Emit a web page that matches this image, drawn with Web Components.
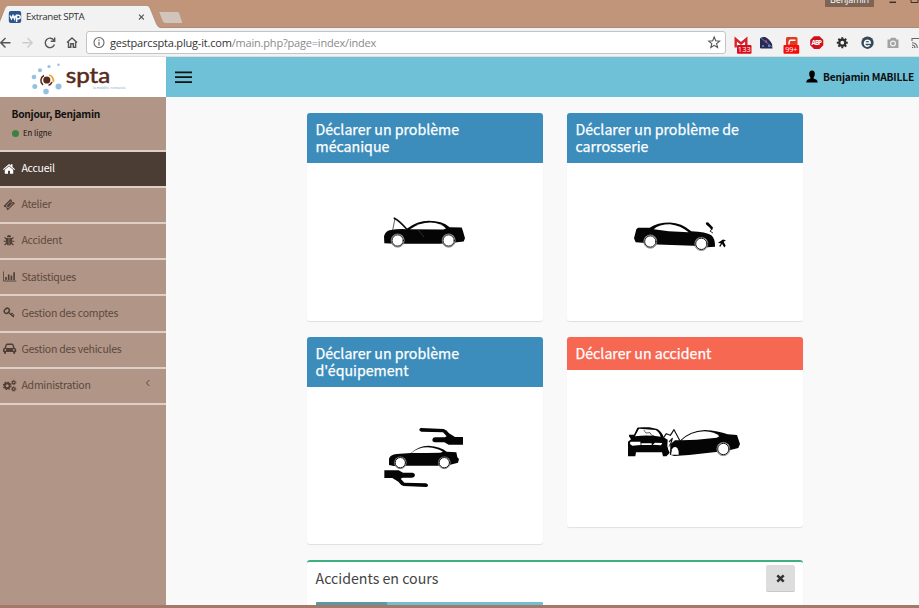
<!DOCTYPE html>
<html lang="fr">
<head>
<meta charset="utf-8">
<title>Extranet SPTA</title>
<style>
body{margin:0;width:919px;height:608px;overflow:hidden;font-family:"Noto Sans CJK JP","Open Sans",sans-serif}
</style>
</head>
<body>
<extranet-window></extranet-window>
<script>
function define(name, html) {
  const tpl = document.createElement('template');
  tpl.innerHTML = html;
  customElements.define(name, class extends HTMLElement {
    constructor() {
      super();
      this.attachShadow({mode: 'open'}).append(tpl.content.cloneNode(true));
    }
  });
}

define('browser-tabs', `
<style>
:host{display:flex;height:28px;background:#c19579;border-bottom:1px solid #a98a7c;box-sizing:border-box;position:relative;font-family:"Open Sans",sans-serif}
svg{display:block;width:190px;height:28px;flex:none}
.t{position:absolute;left:26px;top:10px;font-size:9.800px;line-height:14px;color:#333;white-space:nowrap;letter-spacing:-.43px}
.u{position:absolute;left:825px;top:0;width:49px;height:7px;overflow:hidden;background:#7d6556;color:#fff}
.u span{display:block;font-size:9px;line-height:14px;margin-top:-7px;text-align:center;letter-spacing:-.1px}
.w{position:absolute;left:885px;top:0;width:34px;height:6px}
</style>
<svg viewBox="0 0 190 28"><path d="M0 28V22L5 8Q6 5.500 8 5.500H147Q149 5.500 150 8L156.500 24Q158 28 162 28Z" fill="#f2f2f2"/><path d="M0 20L5 8Q6 5.500 8 5.500H147Q149 5.500 150 8L156.500 24Q158 28 162 28" fill="none" stroke="#a58777" stroke-width=".7"/>
<path d="M158.500 11.500H177Q179 11.500 179.600 13L183 23.500H166Q163.500 23.500 162.500 21.500Z" fill="#d2c3bb" stroke="#ac8b79" stroke-width=".6"/>
<rect x="8.800" y="11" width="12.400" height="12" rx="2" fill="#29568f"/><path d="M10 15.500L11.500 18.800 13 15.500 14.500 18.800 15.500 15.500M16.600 22V15.300H18.500A1.700 1.700 0 0 1 18.500 18.800H16.600" fill="none" stroke="#fff" stroke-width="1.500"/>
<path d="M139 14.700L143.800 19.500M143.800 14.700L139 19.500" stroke="#555" stroke-width="1.100"/></svg>
<span class="t">Extranet SPTA</span>
<div class="u"><span>Benjamin</span></div>
<svg class="w" viewBox="0 0 34 6"><path d="M4.500 2.300H11" stroke="#3b302a" stroke-width="1.500"/><path d="M26 0V2.500H33V0" fill="none" stroke="#3b302a"/></svg>
`);

define('browser-toolbar', `
<style>
:host{display:flex;align-items:center;height:29px;background:#f2f2f2;box-sizing:border-box;border-bottom:1px solid #dedede;font-family:"Open Sans",sans-serif}
.nav{width:86px;height:28px;flex:none}
.url{display:flex;align-items:center;box-sizing:border-box;width:640px;height:23px;margin-top:1px;border:1px solid #c4c4c4;border-radius:3px;background:#fff;font-size:11px;letter-spacing:-.19px;flex:none;white-space:pre;color:#8a8a8a}
.url svg{width:23px;height:21px;flex:none}
.url b{font-weight:400;color:#333}
.url .star{margin-left:auto}
.ext{width:193px;height:28px;flex:none}
text{font-family:"Open Sans",sans-serif}
</style>
<svg class="nav" viewBox="0 28 86 28" fill="none" stroke="#555" stroke-width="1.400"><path d="M10.500 42.700H.8M5.500 38L.8 42.700 5.500 47.400"/><path d="M22.500 42.700H32M27.500 38L32.200 42.700 27.500 47.400" stroke="#ccc"/><path d="M54 40.400A4.700 4.700 0 1 0 54.400 44.500M54.700 37.500V41.300H50.800"/><path d="M67 42.600L72 38 77 42.600M68.500 42V47.200H70.800V43.800H73.300V47.200H75.600V42"/></svg>
<div class="url"><svg viewBox="0 0 23 21" fill="none" stroke="#666"><circle cx="12" cy="10.500" r="5" stroke-width="1.100"/><path d="M12 9.800V13.500M12 7.500V8.800" stroke-width="1.200"/></svg><b>gestparcspta.plug-it.com</b><span>/main.php?page=index/index</span><svg class="star" viewBox="0 0 23 21"><path transform="translate(2 0)" d="M10.200 5L11.700 8.800 15.600 9.100 12.600 11.600 13.600 15.500 10.200 13.300 6.800 15.500 7.800 11.600 4.800 9.100 8.700 8.800Z" fill="none" stroke="#555" stroke-width="1.100"/></svg></div>
<svg class="ext" viewBox="726 28 193 28">
<rect x="734.500" y="38" width="13" height="9.500" fill="#fff"/><path d="M735.700 47.500V39L741 43.500 746.300 39V47.500" fill="none" stroke="#d3232b" stroke-width="2.400"/><rect x="737" y="45" width="14.500" height="8.700" rx="1" fill="#d90d1b"/><text x="744.300" y="52.400" font-size="7.500" text-anchor="middle" fill="#fff">133</text>
<path d="M760 48V38.500Q761 36.500 765 37Q769 38.500 772 44L772.500 48.500H761Z" fill="#252b58"/><path d="M761 38L772 47" stroke="#687cab"/><circle cx="766" cy="41.500" r="1.200" fill="#c44c5a"/><circle cx="769" cy="46" r="1" fill="#8c9ad0"/><circle cx="763" cy="46" r=".8" fill="#c2cbea"/>
<rect x="786" y="37" width="11.500" height="9" rx="1.500" fill="#e23b22"/><path d="M795.500 40.300H790.500Q789 40.300 789 44.500" fill="none" stroke="#fff" stroke-width="1.500"/><rect x="783.500" y="45" width="15.700" height="8.700" rx="1" fill="#f50d0d"/><text x="791.300" y="52.200" font-size="7.200" text-anchor="middle" fill="#fff">99+</text>
<path d="M814 36.200H819.500L823.300 40V45.300L819.500 49.100H814L810.200 45.300V40Z" fill="#d0101c"/><text x="816.800" y="45.200" font-size="6.300" font-weight="700" text-anchor="middle" fill="#fff" textLength="10.500">ABP</text>
<g transform="translate(842.300 42.700)" stroke="#2d2d2d" fill="none"><circle r="3" stroke-width="2.200"/><path d="M0-5.500V-3.500M0 3.500V5.500M-5.500 0H-3.500M3.500 0H5.500M-3.900-3.900L-2.600-2.600M3.900 3.900L2.600 2.600M-3.900 3.900L-2.600 2.600M3.900-3.900L2.600-2.600" stroke-width="2"/></g>
<circle cx="867.500" cy="42.700" r="6.200" fill="#34485a"/><path d="M864.500 43H870.300A2.900 3 0 1 0 869.500 45.300" stroke="#fff" fill="none" stroke-width="1.500"/>
<path d="M887.500 39.500H890L891 37.800H895.500L896.500 39.500H898.500V48H887.500Z" fill="#a2a2a2"/><circle cx="893" cy="43.500" r="2.400" fill="none" stroke="#f2f2f2" stroke-width="1.200"/>
<path d="M912 41V38.500H919M912 47.500H913.300M912 45A3 3 0 0 1 915 48M912 42.700A5 5 0 0 1 917.300 48" fill="none" stroke="#666" stroke-width="1.100"/>
</svg>
`);

define('app-header', `
<style>
:host{display:flex;height:40.300px;background:#6fc1d8}
.logo{width:166px;height:40.300px;background:#fff;flex:none}
.logo text{font-family:Lato,"Open Sans",sans-serif}
.menu{width:34px;height:40px;flex:none}
.user{margin-left:auto;display:flex;align-items:center;font-size:10.200px;letter-spacing:-.18px;font-weight:700;color:#0d0d0d;padding-right:5px;line-height:14px;white-space:nowrap}
.user svg{width:12px;height:13px;margin-right:5.500px;margin-top:-2px}
</style>
<svg class="logo" viewBox="0 57 166 40.300"><g fill="#94c1df"><circle cx="34" cy="77" r="2.300"/><circle cx="40" cy="70.300" r="2"/><circle cx="49" cy="66.500" r="1.600"/><circle cx="58.500" cy="64.800" r="1.200"/><circle cx="34.800" cy="86.500" r="2.500"/><circle cx="46" cy="91.500" r="2.800"/><circle cx="58.500" cy="86.500" r="3"/></g>
<circle cx="46.800" cy="80" r="3.600" fill="#582a19"/><path d="M44 75.500A5.700 5.700 0 0 0 43 85M48.500 85.400A5.700 5.700 0 0 0 52 82" fill="none" stroke="#582a19" stroke-width="1.500"/><path d="M49 75A6 6 0 0 1 53.300 82" fill="none" stroke="#e7a52c" stroke-width="1.800"/>
<text x="65.800" y="83.300" font-size="21" font-weight="400" fill="#582a19" stroke="#582a19" stroke-width=".5" textLength="44.500" lengthAdjust="spacingAndGlyphs">spta</text><text x="93" y="89" font-size="3.800" fill="#7fb6d4" textLength="33" lengthAdjust="spacingAndGlyphs">la mobilité retrouvée</text></svg>
<svg class="menu" viewBox="166 57 34 40"><path d="M175 72.300H192M175 77.200H192M175 82.200H192" stroke="#111" stroke-width="1.700"/></svg>
<div class="user"><svg viewBox="0 0 12 13"><path d="M6 .5C8 .5 8.800 2 8.800 4C8.800 5.800 8.200 6.700 7.600 7.400V8.600C9 9.300 11.700 9.500 11.700 12.500H.3C.3 9.500 3 9.300 4.400 8.600V7.400C3.800 6.700 3.200 5.800 3.200 4C3.200 2 4 .5 6 .5Z"/></svg><span>Benjamin MABILLE</span></div>
`);

const glyphs = {
  home: '<path d="M0 7.200L6 2 7.800 3.500V2.300H9.500V5L12 7.200 11.300 8 6 3.500.7 8Z"/><path d="M1.800 7.700L6 4.200 10.200 7.700V11.800H7V8.800H5V11.800H1.800Z"/>',
  ticket: '<path fill-rule="evenodd" d="M.5 8L7.500 1 8.900 2.300A1.200 1.200 0 0 0 10.500 4L11.900 5.300 4.800 12.300 3.500 11A1.200 1.200 0 0 0 1.900 9.300ZM2.600 7.800L5.200 10.400 9.800 5.700 7.200 3.200Z"/><path d="M3.500 7.800L7.200 4.100 9 5.800 5.200 9.500Z"/>',
  bug: '<path d="M3.900 3.300A2.100 2.200 0 0 1 8.100 3.300ZM3 4H5.700V11.500C3.700 11.200 3 9.500 3 7.500ZM6.300 4H9V7.500C9 9.500 8.300 11.200 6.300 11.500Z"/><path d="M3.300 5L1.500 3.300M.6 7.300H3M3.500 9L1.600 11M8.700 5L10.500 3.300M11.400 7.300H9M8.500 9L10.400 11" fill="none" stroke="currentColor" stroke-width="1.100"/>',
  chart: '<path d="M.4 1.500V11H13.300" fill="none" stroke="currentColor" stroke-width=".9"/><path d="M2.200 7H3.800V10H2.200ZM4.900 4.500H6.500V10H4.900ZM7.600 5.500H9.200V10H7.600ZM10.300 2.300H11.900V10H10.300Z"/>',
  key: '<ellipse cx="3.800" cy="4.800" rx="2.800" ry="2.200" transform="rotate(-45 3.800 4.800)" fill="none" stroke="currentColor" stroke-width="1.500"/><path d="M5.300 6.300L10.800 11M8.100 8.600L9.600 7M9.500 10L11 8.400" fill="none" stroke="currentColor" stroke-width="1.400"/>',
  car: '<path fill-rule="evenodd" d="M1.500 6L2.700 2.600Q3.100 1.600 4.200 1.600H9Q10.100 1.600 10.500 2.600L11.700 6Q13.200 6.300 13.200 7.600V10H12.200V11Q12.200 12 11.200 12T10.200 11V10H3V11Q3 12 2 12T1 11V10H0V7.600Q0 6.300 1.500 6ZM3 5.900H10.200L9.300 3.100H3.900ZM2.300 7A.9.900 0 1 0 2.400 8.800.9.900 0 1 0 2.300 7M10.800 7A.9.900 0 1 0 10.900 8.800.9.900 0 1 0 10.800 7"/>',
  cogs: '<g fill="none" stroke="currentColor"><circle cx="4.200" cy="6.800" r="2.500" stroke-width="1.900"/><circle cx="4.200" cy="6.800" r="3.900" stroke-width="1.100" stroke-dasharray="1.500 1.560"/><circle cx="10.700" cy="3.500" r="1.400" stroke-width="1.200"/><circle cx="10.700" cy="3.500" r="2.300" stroke-width=".7" stroke-dasharray=".9 .9"/><circle cx="10.700" cy="10" r="1.400" stroke-width="1.200"/><circle cx="10.700" cy="10" r="2.300" stroke-width=".7" stroke-dasharray=".9 .9"/></g>'
};

customElements.define('nav-item', class extends HTMLElement {
  connectedCallback() {
    this.attachShadow({mode: 'open'}).innerHTML = `
<style>
:host{display:flex;align-items:center;box-sizing:border-box;height:36.180px;border-top:2px solid #decfc8;padding-left:3.300px;padding-bottom:1.500px;color:#5c493f;font-size:10.500px;letter-spacing:-.25px;line-height:14px}
:host([active]){background:#4b3c34;color:#fff}
.i{width:14px;height:13px;fill:currentColor;margin-right:4.200px;flex:none;color:#4e3e36}
:host([active]) .i{color:#fff}
span{white-space:nowrap}
.c{width:6px;height:8px;margin-left:auto;margin-right:15px;margin-bottom:4px}
</style>
<svg class="i" viewBox="0 0 14 13">${glyphs[this.getAttribute('icon')]}</svg><span><slot></slot></span>
${this.hasAttribute('expandable') ? '<svg class="c" viewBox="0 0 6 8"><path d="M4.300 1L1.500 4 4.300 7" fill="none" stroke="#5c493f"/></svg>' : ''}`;
  }
});

define('side-bar', `
<style>
:host{display:block;width:165.500px;background:#b19586;flex:none}
.p{height:52.400px;box-sizing:border-box;padding:9px 0 0 11.500px;color:#111}
.n{font-size:10.200px;font-weight:700;line-height:16px;letter-spacing:-.26px}
.s{display:flex;align-items:center;font-size:7.800px;line-height:12px;margin-top:5px}
.s i{width:7.500px;height:7.500px;border-radius:50%;background:#3c8044;margin-right:4px}
.end{border-top:2px solid #decfc8}
</style>
<div class="p"><div class="n">Bonjour, Benjamin</div><div class="s"><i></i><span>En ligne</span></div></div>
<nav-item icon="home" active>Accueil</nav-item>
<nav-item icon="ticket">Atelier</nav-item>
<nav-item icon="bug">Accident</nav-item>
<nav-item icon="chart">Statistiques</nav-item>
<nav-item icon="key">Gestion des comptes</nav-item>
<nav-item icon="car">Gestion des vehicules</nav-item>
<nav-item icon="cogs" expandable>Administration</nav-item>
<div class="end"></div>
`);

define('report-card', `
<style>
:host{display:flex;flex-direction:column;width:236px;border-radius:3px;background:#fff;box-shadow:0 1px 1px rgba(0,0,0,.1);overflow:hidden}
header{background:var(--tone,#3c8dbc);color:#fff;font-size:14.200px;font-weight:400;-webkit-text-stroke:.25px #fff;line-height:17px;padding:8.300px 8px 8px 8.500px}
::slotted(svg){display:block;width:236px;height:157.500px}
</style>
<header><slot name="title"></slot></header><slot></slot>
`);

define('progress-bar', `
<style>
:host{display:block;width:227.500px;height:10px;background:#72bed4;border-radius:1px;overflow:hidden}
div{width:71.500px;height:10px;background:#5997a9}
</style><div></div>
`);

define('list-box', `
<style>
:host{display:block;box-sizing:border-box;width:496px;height:80px;background:#fff;border-top:2px solid #3fb080;border-radius:3px;box-shadow:0 1px 1px rgba(0,0,0,.1);padding:3px 8px 0 8.500px}
header{display:flex;justify-content:space-between;height:37px;font-size:14.200px;line-height:26px;color:#444}
button{width:29.500px;height:27px;border:0;border-bottom:1px solid #c8c8c8;border-radius:2px;background:#ddd;padding:0;display:grid;place-items:center}
svg{width:9px;height:9px}
</style>
<header><slot name="title"></slot><button aria-label="Fermer"><svg viewBox="0 0 9 9"><path d="M1.300 1.300L7.700 7.700M7.700 1.300L1.300 7.700" stroke="#333" stroke-width="2.500"/></svg></button></header>
<slot></slot>
`);

define('extranet-window', `
<style>
:host{display:flex;flex-direction:column;width:919px;height:608px;background:#f9f9f9}
.body{display:flex;height:508.200px;overflow:hidden}
main{display:grid;grid-template-columns:236px 236px;grid-template-rows:207.500px 207.500px 80px;column-gap:24px;row-gap:16px;align-items:start;align-content:start;padding:15.900px 0 0 141.500px}
list-box{grid-column:1/3}
.edge{height:2.500px;background:#a5796a;flex:none}
.k{fill:#050505}
.l{fill:none;stroke:#111;stroke-width:5;stroke-linejoin:round;stroke-linecap:round}
.wh{fill:#fff;stroke:#555;stroke-width:2}
.g{fill:#fff}
</style>
<browser-tabs></browser-tabs>
<browser-toolbar></browser-toolbar>
<app-header></app-header>
<div class="body">
<side-bar></side-bar>
<main>
<report-card><span slot="title">Déclarer un problème<br>mécanique</span>
<svg viewBox="21 175.500 708 472.500"><path class="k" d="M253 416L252 396Q254 382 268 377Q292 373 318 374Q352 349 387 349Q426 349 449 368L485 369L489 380L495 401L491 411L464 414L420 418H313L268 417Z"/><path class="g" d="M330 374Q357 355 391 354Q424 356 438 372L430 375Z"/><path class="l" d="M319 373Q300 350 283 341" stroke-width="5"/><path class="l" d="M285 342L278 377" style="stroke-width:2"/><circle class="wh" cx="293" cy="408" r="20"/><circle class="wh" cx="446" cy="408" r="20"/><circle class="l" cx="293" cy="408" r="17" style="stroke-width:3"/><circle class="l" cx="446" cy="408" r="17" style="stroke-width:3"/><path d="M355 376L372 398" stroke="#444" stroke-width="2"/></svg></report-card>
<report-card><span slot="title">Déclarer un problème de<br>carrosserie</span>
<svg viewBox="21 175.500 708 472.500"><path class="k" d="M222 401L229 374L234 370L269 370Q291 354 330 354Q364 355 394 380Q438 382 454 392Q466 402 465 427L441 428L400 424L292 420L248 415L227 413Z"/><path class="g" d="M281 374Q297 359 330 359Q361 362 386 383L326 380Z"/><circle class="wh" cx="271" cy="411" r="20"/><circle class="wh" cx="424" cy="418" r="20"/><circle class="l" cx="271" cy="411" r="17" style="stroke-width:3"/><circle class="l" cx="424" cy="418" r="17" style="stroke-width:3"/><path class="k" d="M437 355L444 353L459 369L456 378L448 368L439 361Z"/><path class="l" d="M455 374L450 380L458 385" style="stroke-width:2.500"/><path class="k" d="M474 415L489 405L498 407L491 412L497 424L493 429L486 418L482 426L477 425L483 417Z"/></svg></report-card>
<report-card><span slot="title">Déclarer un problème<br>d'équipement</span>
<svg viewBox="21 186 708 472.500"><path class="k" d="M267 420V401Q271 389 290 387L333 384Q354 363 386 362Q423 365 440 380L469 382L472 397L477 402L474 413L451 419L415 422H319L281 423Z"/><path class="g" d="M334 384Q354 367 383 367Q412 369 429 380L421 383L379 384Z"/><circle class="wh" cx="301" cy="413" r="18"/><circle class="wh" cx="433" cy="413" r="18"/><circle class="l" cx="301" cy="413" r="15.500" style="stroke-width:3"/><circle class="l" cx="433" cy="413" r="15.500" style="stroke-width:3"/>
<path class="k" d="M364 309L431 312Q440 315 447 325L465 336H489V359H446L433 352H404Q396 350 397 344Q398 337 406 337H434L440 334L429 322L364 320Q357 318 358 313Q360 309 364 309Z"/><path class="k" transform="rotate(180 371 397.500)" d="M364 309L431 312Q440 315 447 325L465 336H489V359H446L433 352H404Q396 350 397 344Q398 337 406 337H434L440 334L429 322L364 320Q357 318 358 313Q360 309 364 309Z"/></svg></report-card>
<report-card style="--tone:#f76852"><span slot="title">Déclarer un accident</span>
<svg viewBox="21 135 708 472.500"><path class="k" d="M204 394V350L213 343L207 334V329H222L232 308Q238 306 268 307L292 312Q307 322 311 337L323 344L322 364L329 384L319 394H309L306 382H228L226 394Z"/><path class="g" d="M225 334L237 311L287 315Q298 321 302 335Q263 329 225 334ZM211 350H241L242 360L217 362L210 357ZM285 353L307 354L303 361L278 359ZM244 355H275V360H244Z"/><path class="l" d="M252 316L258 324 270 323 274 330 282 333" style="stroke-width:2"/><path class="l" d="M311 337L319 326 331 331 342 314 359 346M328 350L337 340 333 354 326 366" style="stroke-width:3.500"/>
<path class="k" d="M330 389L331 358L345 346H361Q387 318 434 315Q475 317 503 328L531 330L540 357L535 369L511 375L468 381L387 390L343 393Z"/><path class="g" d="M365 346Q391 321 433 319Q466 321 478 334L470 338L410 344Z"/><path class="g" d="M333 389L336 373Q342 362 352 369Q357 376 356 389Z"/><path class="g" d="M324 368L327 356 330 372 327 378Z"/><circle class="wh" cx="490" cy="372" r="20"/><circle class="l" cx="490" cy="372" r="17" style="stroke-width:3"/></svg></report-card>
<list-box><span slot="title">Accidents en cours</span><progress-bar></progress-bar></list-box>
</main>
</div>
<div class="edge"></div>
`);
</script>
</body>
</html>
